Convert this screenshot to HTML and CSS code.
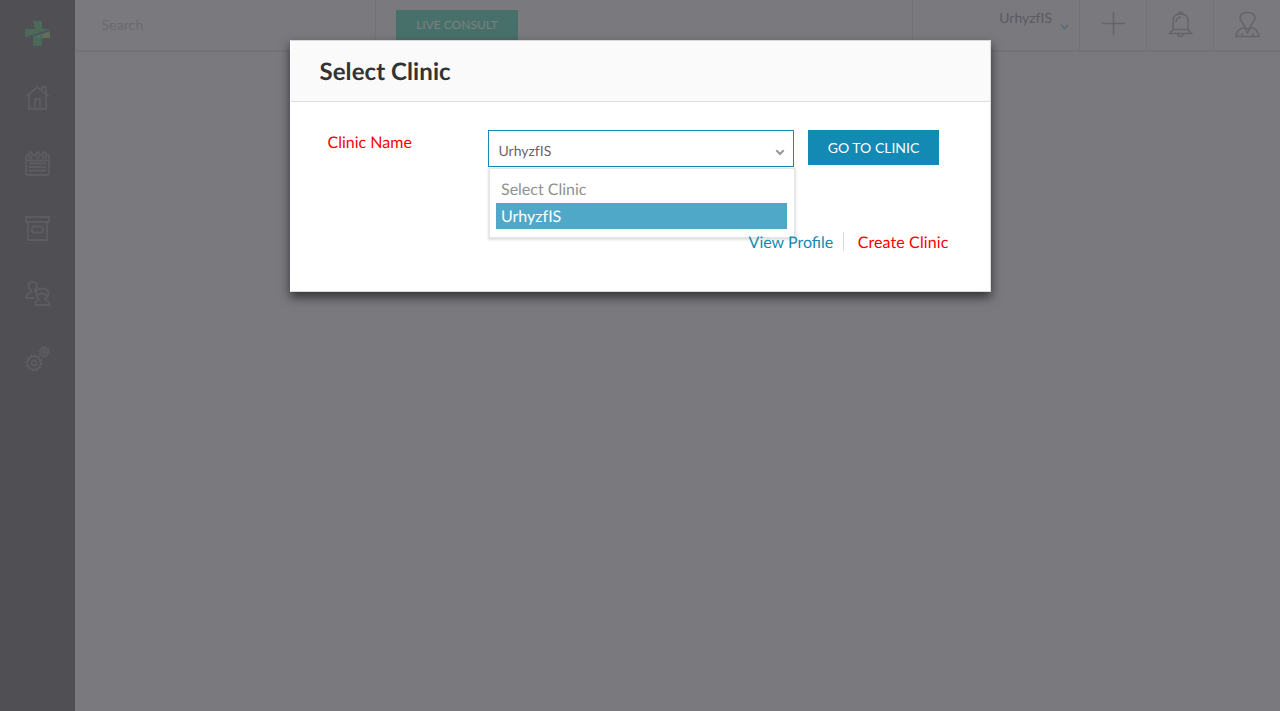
FILE: index.html
```html
<!DOCTYPE html>
<html lang="en">
<head>
<meta charset="utf-8">
<title>Select Clinic</title>
<link rel="stylesheet" href="styles.css">
</head>
<body>
<div class="app">
  <nav class="sidebar">
    <svg class="logo" viewBox="0 0 25 25"><path fill="#4b6b58" d="M8 0h9v8h8v1L0 17V8h10z"/><path fill="#5e6d5c" d="M25 10v7h-8v-4z"/><path fill="#4a6858" d="M8 15l9-3v13H8z"/><path fill="#5c6d62" d="M11 16l4-2v3h-4z"/><path d="M0 17L25 9" stroke="#4b5362" stroke-width="1.500"/></svg>
    <svg class="icon" viewBox="0 0 25 25"><path d="M1 10.500L12.500 1 24 10.500M4 9v14h17V9M10 23V13h5v10M17 4V1h4v7"/></svg>
    <svg class="icon" viewBox="0 0 25 25"><rect x="1" y="4" width="23" height="20" rx="2"/><path d="M1 9.500h23M4 12.500h17M4 16h17M4 19.500h17"/><g class="rings"><rect x="4" y="1" width="3" height="6" rx="1.500"/><rect x="11" y="1" width="3" height="6" rx="1.500"/><rect x="18" y="1" width="3" height="6" rx="1.500"/></g></svg>
    <svg class="icon" viewBox="0 0 25 25"><path d="M1 1h23v5H1zM3 6h19v18H3z"/><rect x="7" y="10.500" width="11" height="6" rx="1"/></svg>
    <svg class="icon" viewBox="0 0 25 25"><path d="M9.500 17H1c0-4 3-5 5-5.500v-2C2 6 2.500 1 7.500 1s5.500 5 2 8.500v2M17 7.500c-4 0-6 2-6 5s1 3 3 6c-2 .7-4 1.500-4 5.500h14.500c0-4-2-4.800-4.500-5.500 2-3 3.500-3 3.500-6s-2.500-5-6.500-5zM11.500 14c3 0 4-1 5-2.500 1 1.500 3 2.500 6.500 2.500"/></svg>
    <svg class="icon" viewBox="0 0 25 25"><circle cx="9" cy="17" r="6.600"/><circle cx="9" cy="17" r="7.700" class="teeth-large"/><circle cx="9" cy="17" r="2.500"/><circle cx="19" cy="6" r="4"/><circle cx="19" cy="6" r="5" class="teeth-small"/><circle cx="19" cy="6" r="1.500"/></svg>
  </nav>
  <div class="page">
    <header class="topbar">
      <div class="search">Search</div>
      <button class="live">LIVE CONSULT</button>
      <div class="clinic-menu"><span>UrhyzfIS</span><svg class="menu-arrow" viewBox="0 0 9 6"><path d="M1 1l3.500 3.500L8 1"/></svg></div>
      <div class="tool"><svg viewBox="0 0 25 27"><path d="M12.500 1v23M1 12.500h23"/></svg></div>
      <div class="tool"><svg viewBox="0 0 25 27"><path d="M5 18.500V10q0-7 7.500-7T20 10v8.500l3.500 4h-22zM5 18.500h15M10 3q.5-2 2.500-2T15 3M9.500 22.500q.5 3 3 3t3-3M8 11q0-4 5-5"/></svg></div>
      <div class="tool last"><svg viewBox="0 0 25 27"><path d="M12.500 1.500C7 1.500 5 4 5 7s3 5 4.500 8c.8 1.500 1.500 3 3 3s2.200-1.500 3-3C17 12 20 10 20 7s-2-5.500-7.500-5.500zM9.500 16.500q-7.500 1-8.500 9h23q-1-8-8.500-9M9.500 16.500l3 5.500 3-5.500M7 25.500V22M18 25.500V22"/></svg></div>
    </header>
  </div>
</div>
<section class="dialog">
  <h1 class="dialog-title">Select Clinic</h1>
  <div class="dialog-body">
    <div class="form-row">
      <label class="clinic-label">Clinic Name</label>
      <div class="select">
        <div class="select-box"><span>UrhyzfIS</span><svg class="select-arrow" viewBox="0 0 10 7"><path d="M1.300 1.300L5 5l3.700-3.700"/></svg></div>
        <div class="options">
          <div class="option">Select Clinic</div>
          <div class="option selected">UrhyzfIS</div>
        </div>
      </div>
      <button class="go">GO TO CLINIC</button>
    </div>
    <div class="links"><a class="profile">View Profile</a><a class="create">Create Clinic</a></div>
  </div>
</section>
</body>
</html>
```
FILE: styles.css
```css
* { box-sizing: border-box; }
body { margin: 0; background: #7a797e; font-family: Lato, sans-serif; text-rendering: geometricPrecision; overflow: hidden; }
.app { display: flex; height: 711px; }
.sidebar { width: 75px; background: #504f54; display: flex; flex-direction: column; align-items: center; padding-top: 21px; gap: 40px; }
.logo { width: 25px; height: 25px; }
.icon { width: 25px; height: 25px; overflow: visible; fill: none; stroke: #5d5c61; stroke-width: 1.800; }
.rings { fill: #504f54; }
.teeth-large { stroke-dasharray: 2 2.030; stroke-width: 2; }
.teeth-small { stroke-dasharray: 1.800 2.127; stroke-width: 1.800; }
.page { flex: 1; }
.topbar { height: 52px; display: flex; align-items: flex-start; border-bottom: 2px solid #747378; }
.search { width: 301px; height: 50px; padding-left: 26.500px; font-size: 14px; letter-spacing: .1px; line-height: 50px; color: #6b6a6f; border-right: 1px solid #747378; }
.live { width: 122px; height: 32px; margin: 10px 0 0 20px; padding: 0 0 3px; border: 0; background: #48706a; color: #7b807f; font: 12px/28px Lato, sans-serif; }
.clinic-menu { margin-left: auto; width: 168px; height: 50px; border-left: 1px solid #727176; border-right: 1px solid #727176; display: flex; justify-content: flex-end; padding: 9px 10px 0 0; gap: 8px; font-size: 14px; line-height: 18px; color: #5b5a5f; }
.menu-arrow { width: 9px; height: 6px; margin-top: 15px; fill: none; stroke: #536b78; stroke-width: 1.500; }
.tool { width: 67px; height: 50px; border-right: 1px solid #727176; display: flex; justify-content: center; padding-top: 11px; }
.tool svg { width: 25px; height: 27px; fill: none; stroke: #656469; stroke-width: 1.500; }
.last { width: 66px; border-right: 0; }
.dialog { position: absolute; left: 290px; top: 40px; width: 701px; height: 252px; background: #fff; border: 1px solid #d9d9d9; border-left-color: #fff; box-shadow: 0 5px 10px rgba(0,0,0,.6); }
.dialog-title { margin: 0; height: 61px; padding-left: 28.500px; background: #fafafa; border-bottom: 1px solid #ddd; color: #333; font-size: 24px; letter-spacing: .08px; font-weight: 700; line-height: 62px; }
.dialog-body { padding: 28px 41.500px 0 36.500px; }
.form-row { display: flex; align-items: flex-start; }
.clinic-label { width: 160.500px; font-size: 16px; line-height: 26px; color: #f00; }
.select { position: relative; width: 306px; margin-right: 14px; }
.select-box { height: 37px; border: 1px solid #138ab3; padding: 4px 8px 0 9.500px; display: flex; align-items: center; justify-content: space-between; font-size: 14px; line-height: 16px; color: #666; }
.select-arrow { width: 10px; height: 7px; margin-top: 3px; fill: none; stroke: #999; stroke-width: 2; }
.options { position: absolute; left: 1px; top: 38px; width: 306px; height: 70px; padding: 8px 7px 0 6px; background: #fff; border: 1px solid #e5e5e5; box-shadow: 0 1px 2px 1px rgba(0,0,0,.12); }
.option { height: 26px; padding-left: 5px; font-size: 16px; line-height: 26px; color: #919191; }
.selected { line-height: 28px; background: #50a8c8; color: #fff; }
.go { width: 131px; height: 35px; padding: 0; border: 0; background: #138ab3; color: #fff; font: 14px/35px Lato, sans-serif; }
.links { position: relative; z-index: 1; display: flex; justify-content: flex-end; margin-top: 65px; font-size: 16px; line-height: 21px; height: 19px; }
.profile { color: #138ab3; padding-right: 10px; margin-right: .5px; border-right: 1px solid #ddd; }
.create { color: #f00; padding-left: 13px; letter-spacing: .11px; }
```
